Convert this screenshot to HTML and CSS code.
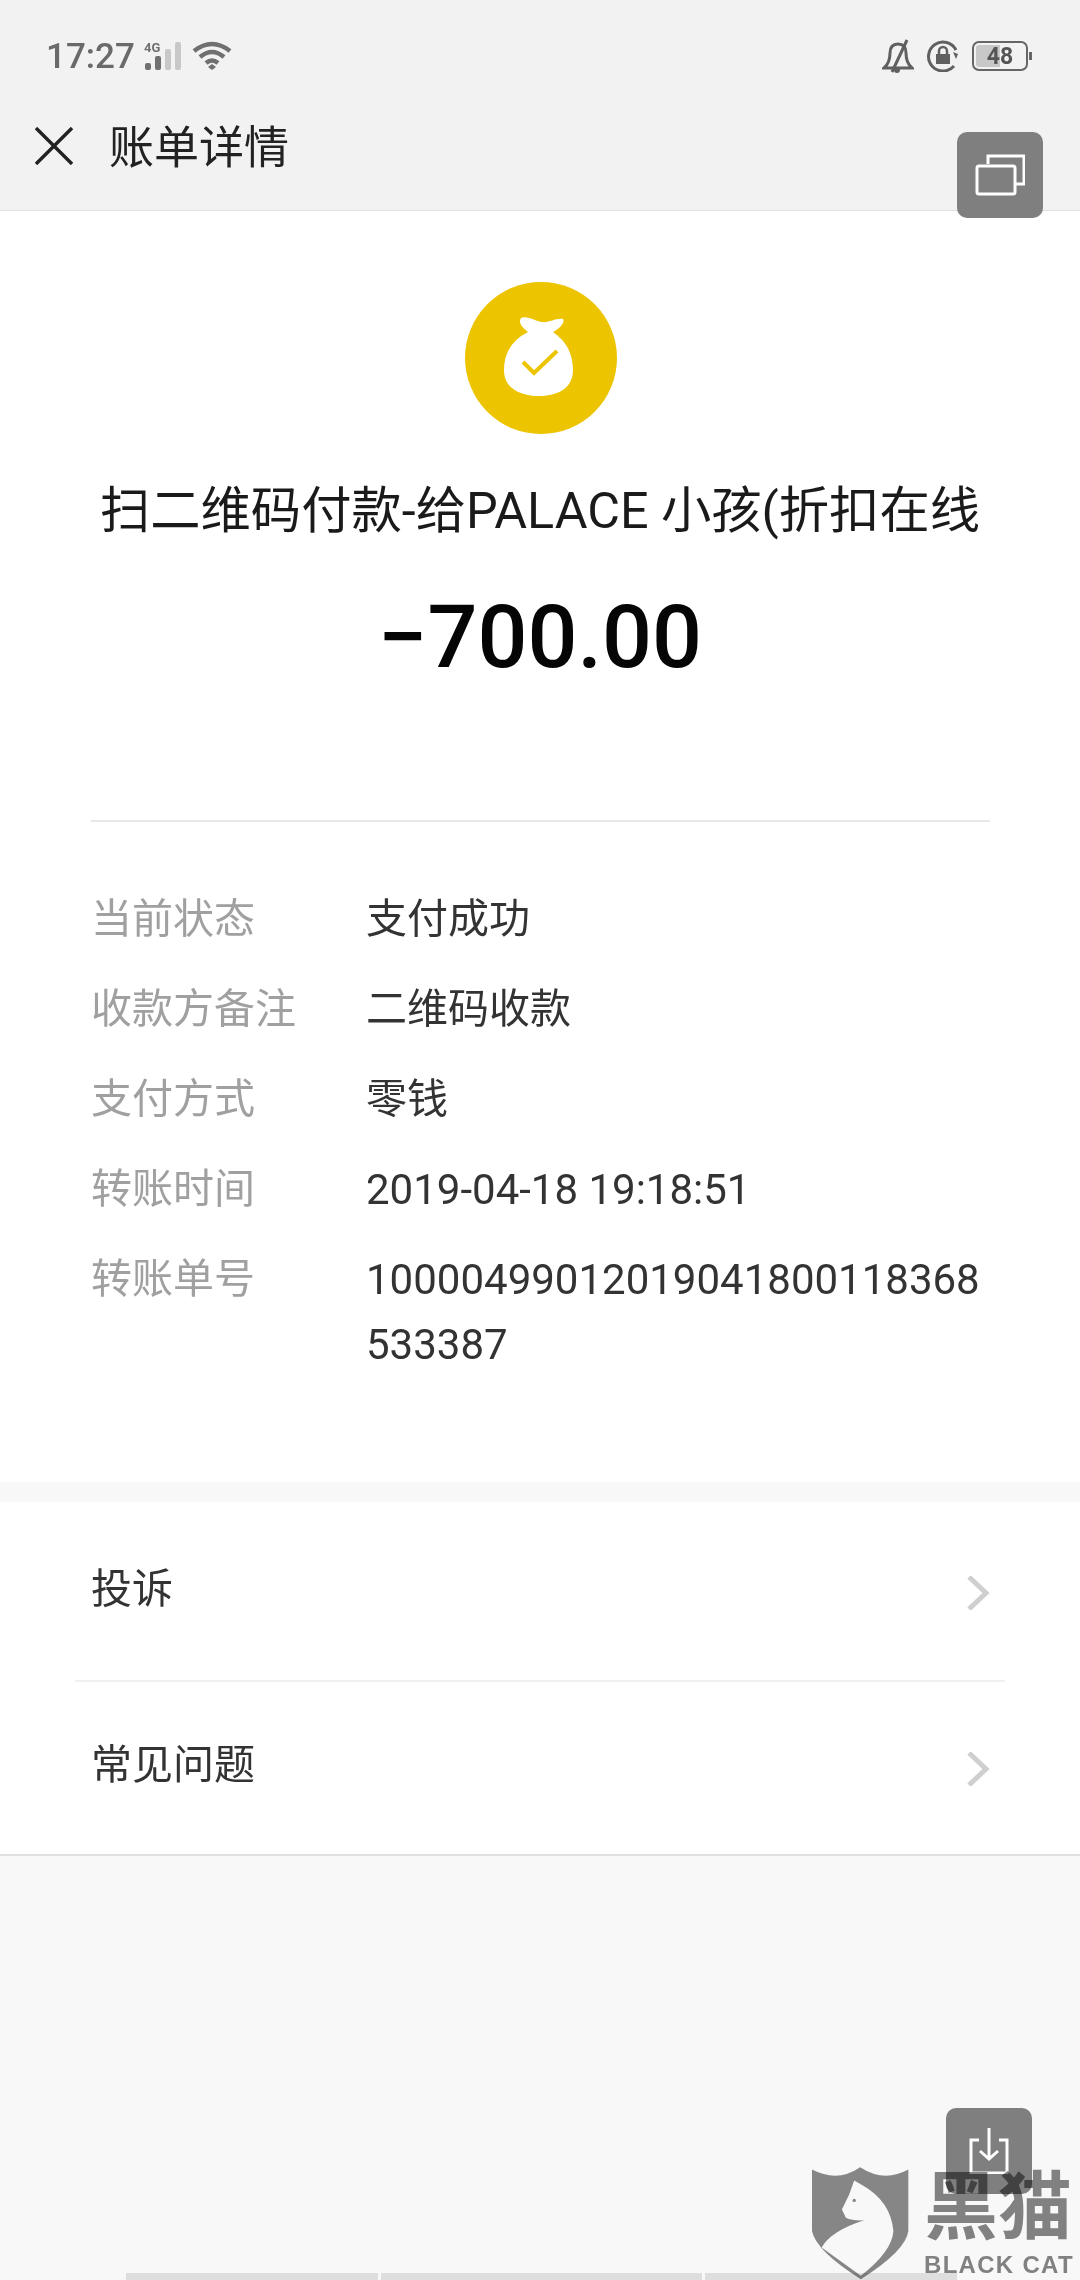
FILE: index.html
```html
<!DOCTYPE html>
<html lang="zh-CN">
<head>
  <meta charset="UTF-8">
  <title>账单详情</title>
  <link rel="stylesheet" href="styles.css">
</head>
<body>
  <div id="screen">
    <div id="top">
      <div class="status-bar">
        <div class="status-left">
          <span class="clock">17:27</span>
          <svg class="signal" width="38" height="30" viewBox="0 0 38 30">
            <text x="0" y="11" class="net">4G</text>
            <rect x="1" y="22" width="6" height="7" rx="2" fill="#707070"/>
            <rect x="11" y="15" width="6" height="14" rx="2" fill="#707070"/>
            <rect x="21" y="8" width="6" height="21" rx="2" fill="#c8c8c8"/>
            <rect x="31" y="1" width="6" height="28" rx="2" fill="#c8c8c8"/>
          </svg>
          <svg class="wifi" width="40" height="30" viewBox="0 0 40 30">
            <path d="M2 10 Q20 -4 38 10" fill="none" stroke="#707070" stroke-width="4.5"/>
            <path d="M8 16 Q20 6 32 16" fill="none" stroke="#707070" stroke-width="4.5"/>
            <path d="M14 22 Q20 17 26 22" fill="none" stroke="#707070" stroke-width="4.5"/>
            <path d="M16 26 L20 23 L24 26 L20 29 Z" fill="#707070"/>
          </svg>
        </div>
        <div class="status-right">
          <svg width="32" height="34" viewBox="0 0 32 34">
            <path d="M2 29 L30 29 Q24 24 24 14 Q24 5 16 5 Q8 5 8 14 Q8 24 2 29 Z" fill="none" stroke="#606060" stroke-width="3"/>
            <path d="M10 33 L25 1" stroke="#606060" stroke-width="3"/>
            <circle cx="15" cy="31" r="3" fill="#606060"/>
          </svg>
          <svg width="32" height="32" viewBox="0 0 32 32">
            <path d="M27 26 A14.5 14.5 0 1 1 29 10" fill="none" stroke="#606060" stroke-width="3"/>
            <path d="M26 12 L31 14 L29 19 Z" fill="#606060"/>
            <rect x="9" y="14" width="14" height="10" fill="#606060"/>
            <path d="M12 14 V11 A4 4 0 0 1 20 11 V14" fill="none" stroke="#606060" stroke-width="2.5"/>
          </svg>
          <div class="battery">
            <div class="battery-body">
              <div class="battery-fill"></div>
              <span class="battery-num">48</span>
            </div>
            <div class="battery-tip"></div>
          </div>
        </div>
      </div>
      <div class="toolbar">
        <svg class="close" width="38" height="38" viewBox="0 0 38 38">
          <path d="M1 1 L37 37 M37 1 L1 37" stroke="#222" stroke-width="3.4"/>
        </svg>
        <span class="toolbar-title">账单详情</span>
      </div>
    </div>

    <div id="bill">
      <svg class="bag-icon" width="152" height="152" viewBox="0 0 152 152">
        <circle cx="76" cy="76" r="76" fill="#ecc400"/>
        <path d="M56 36 Q52 42 63 50 Q39 62 39 88 C39 108 58 114 74 114 C90 114 108 108 108 88 C108 66 96 56 88 50 C96 46 100 40 98 37 C90 36 84 41 77 40 C70 39 62 33 56 36 Z" fill="#fff"/>
        <path d="M58 80 L69 91 L92 69" fill="none" stroke="#ecc400" stroke-width="4"/>
      </svg>
      <div class="bill-title">扫二维码付款-给PALACE 小孩(折扣在线</div>
      <div class="bill-amount">−700.00</div>
      <div class="details">
        <div class="detail-row"><span class="detail-label">当前状态</span><span class="detail-value">支付成功</span></div>
        <div class="detail-row"><span class="detail-label">收款方备注</span><span class="detail-value">二维码收款</span></div>
        <div class="detail-row"><span class="detail-label">支付方式</span><span class="detail-value">零钱</span></div>
        <div class="detail-row"><span class="detail-label">转账时间</span><span class="detail-value number">2019-04-18 19:18:51</span></div>
        <div class="detail-row"><span class="detail-label">转账单号</span><span class="detail-value number">10000499012019041800118368<br>533387</span></div>
      </div>
    </div>

    <div id="links">
      <div class="link-row first">
        <span>投诉</span>
        <svg class="chevron" width="24" height="34" viewBox="0 0 24 34"><path d="M3 1 L20 17 L3 33" fill="none" stroke="#cfcfcf" stroke-width="5"/></svg>
      </div>
      <div class="link-row">
        <span>常见问题</span>
        <svg class="chevron" width="24" height="34" viewBox="0 0 24 34"><path d="M3 1 L20 17 L3 33" fill="none" stroke="#cfcfcf" stroke-width="5"/></svg>
      </div>
    </div>

    <div id="tabs">
      <div class="tab one"></div>
      <div class="tab two"></div>
      <div class="tab three"></div>
    </div>

    <!-- floating bits -->
    <div class="float-btn windows">
      <svg width="50" height="42" viewBox="0 0 50 42">
        <path d="M13 10 V2 H49 V30 H40" fill="none" stroke="#fff" stroke-width="3"/>
        <rect x="2" y="12" width="38" height="28" rx="2" fill="none" stroke="#fff" stroke-width="3"/>
      </svg>
    </div>
    <div class="float-btn save">
      <svg width="40" height="46" viewBox="0 0 40 46">
        <path d="M10 12 H2 V45 H38 V12 H30" fill="none" stroke="#fff" stroke-width="3"/>
        <path d="M20 0 V31 M11 23 L20 31 L29 23" fill="none" stroke="#fff" stroke-width="3"/>
      </svg>
    </div>
    <div class="watermark">
      <svg class="shield" width="98" height="115" viewBox="90 315 295 345">
        <path d="M93 325 Q170 365 238 318 Q310 365 383 325 L383 510 Q375 570 240 655 Q105 570 93 510 Z" fill="#8a8a8a"/>
        <path d="M220 358 L245 372 Q330 420 338 510 Q335 570 240 645 L122 560 Q150 510 250 478 Q215 480 195 470 L183 445 L205 400 Z" fill="#fff"/>
        <circle cx="220" cy="418" r="5" fill="#8a8a8a"/>
      </svg>
      <div class="mark-text">
        <div class="mark-cn">黑猫</div>
        <div class="mark-en">BLACK CAT</div>
      </div>
    </div>
  </div>
</body>
</html>
```

FILE: styles.css
```css
* {
  box-sizing: border-box;
}

body {
  margin: 0;
  font-family: Roboto, "Noto Sans CJK SC", sans-serif;
  background: #f8f8f8;
}

#screen {
  position: relative;
  width: 1080px;
  height: 2280px;
  overflow: hidden;
  display: flex;
  flex-direction: column;
}

#top {
  height: 211px;
  background: #f2f2f2;
  border-bottom: 1px solid #e0e0e0;
}

.status-bar {
  height: 88px;
  padding: 24px 46px 0 46px;
  display: flex;
  justify-content: space-between;
  align-items: center;
}

.status-left {
  display: flex;
  align-items: center;
}

.clock {
  font-size: 35px;
  font-weight: 500;
  color: #6a6a6a;
  margin-right: 9px;
}

.net {
  font-size: 13px;
  font-weight: 700;
  fill: #707070;
}

.wifi {
  margin-left: 10px;
}

.status-right {
  display: flex;
  align-items: center;
  gap: 13px;
  margin-right: 2px;
}

.battery {
  display: flex;
  align-items: center;
}

.battery-body {
  position: relative;
  width: 56px;
  height: 30px;
  border: 2.5px solid #666;
  border-radius: 7px;
  display: flex;
  align-items: center;
  justify-content: center;
}

.battery-fill {
  position: absolute;
  left: 2px;
  top: 2px;
  bottom: 2px;
  width: 24px;
  background: #c8c8c8;
  border-radius: 3px 0 0 3px;
}

.battery-num {
  position: relative;
  font-size: 23px;
  font-weight: 700;
  color: #555;
}

.battery-tip {
  width: 3px;
  height: 8px;
  margin-left: 1px;
  background: #666;
}

.toolbar {
  height: 122px;
  padding: 0 0 6px 35px;
  display: flex;
  align-items: center;
}

.toolbar-title {
  margin-left: 36px;
  margin-bottom: 4px;
  font-size: 45px;
  color: #222;
}

#bill {
  background: #fff;
  height: 1271px;
  padding-top: 71px;
  display: flex;
  flex-direction: column;
  align-items: center;
}

.bag-icon {
  margin-left: 2px;
}

.bill-title {
  margin-top: 42px;
  font-size: 50.3px;
  line-height: 70px;
  color: #1a1a1a;
  white-space: nowrap;
}

.bill-amount {
  margin-top: 36px;
  font-size: 88px;
  font-weight: 500;
  line-height: 110px;
  color: #050505;
}

.details {
  align-self: stretch;
  margin: 128px 90px 0 91px;
  padding-top: 52px;
  border-top: 2px solid #e8e8e8;
}

.detail-row {
  display: flex;
  padding: 12.5px 0;
  font-size: 41px;
  line-height: 65px;
}

.detail-label {
  width: 275px;
  flex-shrink: 0;
  color: #a0a0a0;
}

.detail-value {
  color: #333;
}

.detail-value.number {
  font-size: 42px;
}

#links {
  margin-top: 20px;
  background: #fff;
  border-bottom: 2px solid #e0e0e0;
  height: 354px;
}

.link-row {
  margin: 0 75px;
  padding: 0 15px 0 16px;
  height: 170px;
  display: flex;
  justify-content: space-between;
  align-items: center;
  font-size: 41px;
  color: #333;
}

.link-row span {
  margin-bottom: 13px;
}

.link-row.first {
  height: 180px;
  border-bottom: 2px solid #f0f0f0;
}

.chevron {
  margin-top: 4px;
}

#tabs {
  margin-top: auto;
  height: 7px;
  padding-left: 126px;
  display: flex;
  gap: 3px;
}

.tab {
  background: #dedede;
}

.tab.one {
  width: 252px;
}

.tab.two {
  width: 321px;
}

.tab.three {
  width: 252px;
}

.float-btn {
  position: absolute;
  width: 86px;
  height: 86px;
  background: #7f7f7f;
  border-radius: 10px;
  display: flex;
  align-items: center;
  justify-content: center;
}

.float-btn.windows {
  left: 957px;
  top: 132px;
}

.float-btn.save {
  left: 946px;
  top: 2108px;
}

.watermark {
  position: absolute;
  left: 811px;
  top: 2166px;
  display: flex;
  gap: 15px;
  mix-blend-mode: multiply;
}

.mark-text {
  display: flex;
  flex-direction: column;
}

.mark-cn {
  margin-top: 4px;
  font-size: 74px;
  font-weight: 700;
  line-height: 76px;
  color: #858585;
  white-space: nowrap;
}

.mark-en {
  margin-top: 6px;
  font-family: "Liberation Sans", sans-serif;
  font-size: 24px;
  font-weight: 700;
  line-height: 26px;
  letter-spacing: 1.3px;
  color: #858585;
  white-space: nowrap;
}
```
